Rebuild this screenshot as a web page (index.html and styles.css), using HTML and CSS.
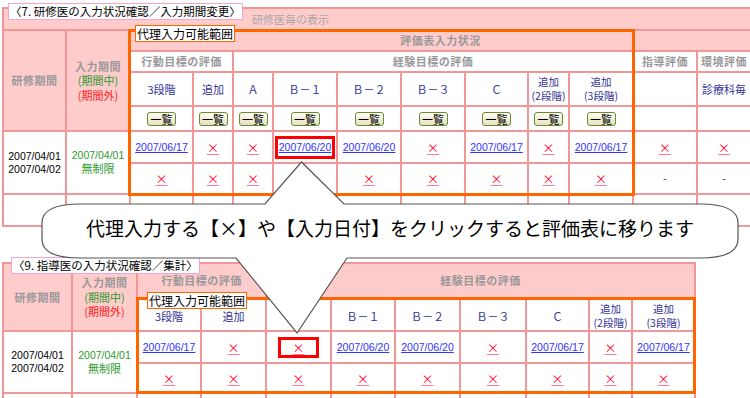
FILE: index.html
```html
<!DOCTYPE html>
<html lang="ja">
<head>
<meta charset="UTF-8" />
<title>代理入力</title>
<link rel="stylesheet" href="styles.css">
</head>
<body>

<div class="panel panel-top">
    <table class="grid grid-top">
        <colgroup>
            <col class="w61"><col class="w62"><col class="w61"><col class="w38"><col class="w38"><col class="w62"><col class="w62">
            <col class="w62"><col class="w61"><col class="w39"><col class="w62"><col class="w62"><col class="w52">
        </colgroup>
        <tr class="h20">
            <td colspan="13" class="pink show">研修医毎の表示</td>
        </tr>
        <tr class="h19">
            <th rowspan="4" class="pink hd">研修期間</th>
            <th rowspan="4" class="pink hd period">入力期間<br><span class="in">(期間中)</span><br><span class="out">(期間外)</span></th>
            <th colspan="11" class="pink hd">評価表入力状況</th>
        </tr>
        <tr class="h19">
            <th colspan="2" class="hd">行動目標の評価</th>
            <th colspan="7" class="hd">経験目標の評価</th>
            <th class="hd">指導評価</th>
            <th class="hd">環境評価</th>
        </tr>
        <tr class="h32 sub">
            <td>3段階</td><td>追加</td><td>Ａ</td><td>Ｂ－１</td><td>Ｂ－２</td><td>Ｂ－３</td><td>Ｃ</td>
            <td class="small">追加<br>(2段階)</td><td class="small">追加<br>(3段階)</td><td></td><td>診療科毎</td>
        </tr>
        <tr class="h23">
            <td><span class="btn">一覧</span></td><td><span class="btn">一覧</span></td><td><span class="btn">一覧</span></td>
            <td><span class="btn">一覧</span></td><td><span class="btn">一覧</span></td><td><span class="btn">一覧</span></td>
            <td><span class="btn">一覧</span></td><td><span class="btn">一覧</span></td><td><span class="btn">一覧</span></td>
            <td></td><td></td>
        </tr>
        <tr class="h30">
            <td rowspan="2" class="term">2007/04/01<br>2007/04/02</td>
            <td rowspan="2" class="term green">2007/04/01<br><span class="jp">無制限</span></td>
            <td><a class="date">2007/06/17</a></td>
            <td><a class="x">×</a></td>
            <td><a class="x">×</a></td>
            <td><a class="date marked">2007/06/20</a></td>
            <td><a class="date">2007/06/20</a></td>
            <td><a class="x">×</a></td>
            <td><a class="date">2007/06/17</a></td>
            <td><a class="x">×</a></td>
            <td><a class="date">2007/06/17</a></td>
            <td><a class="x">×</a></td>
            <td><a class="x">×</a></td>
        </tr>
        <tr class="h29">
            <td><a class="x">×</a></td><td><a class="x">×</a></td><td><a class="x">×</a></td><td><a class="x">×</a></td>
            <td><a class="x">×</a></td><td><a class="x">×</a></td><td><a class="x">×</a></td><td><a class="x">×</a></td>
            <td><a class="x">×</a></td><td class="dash">-</td><td class="dash">-</td>
        </tr>
        <tr class="h30">
            <td></td><td></td><td></td><td></td><td></td><td></td><td></td><td></td><td></td><td></td><td></td><td></td><td></td>
        </tr>
    </table>
    <div class="caption caption-top">〈7. 研修医の入力状況確認／入力期間変更〉</div>
    <div class="proxy proxy-top"><span class="proxy-label">代理入力可能範囲</span></div>
</div>

<div class="panel panel-bottom">
    <table class="grid grid-bottom">
        <colgroup>
            <col class="w67"><col class="w63"><col class="w62"><col class="w63"><col class="w63"><col class="w62">
            <col class="w63"><col class="w64"><col class="w61"><col class="w41"><col class="w61">
        </colgroup>
        <tr class="h33">
            <th rowspan="2" class="pink hd">研修期間</th>
            <th rowspan="2" class="pink hd period">入力期間<br><span class="in">(期間中)</span><br><span class="out">(期間外)</span></th>
            <th colspan="2" class="pink hd">行動目標の評価</th>
            <th colspan="7" class="pink hd">経験目標の評価</th>
        </tr>
        <tr class="h31 sub low">
            <td>3段階</td><td>追加</td><td>Ａ</td><td>Ｂ－１</td><td>Ｂ－２</td><td>Ｂ－３</td><td>Ｃ</td>
            <td class="small">追加<br>(2段階)</td><td class="small">追加<br>(3段階)</td>
        </tr>
        <tr class="h30">
            <td rowspan="2" class="term">2007/04/01<br>2007/04/02</td>
            <td rowspan="2" class="term green">2007/04/01<br><span class="jp">無制限</span></td>
            <td><a class="date">2007/06/17</a></td>
            <td><a class="x">×</a></td>
            <td><a class="x marked">×</a></td>
            <td><a class="date">2007/06/20</a></td>
            <td><a class="date">2007/06/20</a></td>
            <td><a class="x">×</a></td>
            <td><a class="date">2007/06/17</a></td>
            <td><a class="x">×</a></td>
            <td><a class="date">2007/06/17</a></td>
        </tr>
        <tr class="h28">
            <td><a class="x">×</a></td><td><a class="x">×</a></td><td><a class="x">×</a></td><td><a class="x">×</a></td>
            <td><a class="x">×</a></td><td><a class="x">×</a></td><td><a class="x">×</a></td><td><a class="x">×</a></td>
            <td><a class="x">×</a></td>
        </tr>
        <tr class="h30">
            <td></td><td></td><td></td><td></td><td></td><td></td><td></td><td></td><td></td><td></td><td></td>
        </tr>
    </table>
    <div class="caption caption-bottom">〈9. 指導医の入力状況確認／集計〉</div>
    <div class="proxy proxy-bottom"><span class="proxy-label">代理入力可能範囲</span></div>
</div>

<svg class="callout" width="750" height="398" viewBox="0 0 750 398">
    <path d="M80 204 L265 204 L301.5 162 L344 204 L700 204 Q738 204 738 223 L738 239 Q738 258 700 258 L347 258 L297 333 L236 258 L80 258 Q42 258 42 239 L42 223 Q42 204 80 204 Z" />
    <text x="390" y="236">代理入力する【×】や【入力日付】をクリックすると評価表に移ります</text>
</svg>

</body>
</html>
```

FILE: styles.css
```css
* {
    box-sizing: border-box;
}
html, body {
    margin: 0;
}
body {
    position: relative;
    width: 750px;
    height: 398px;
    overflow: hidden;
    background: #fff;
    font-family: "Noto Sans CJK JP", sans-serif;
    font-size: 11px;
    color: #000;
}

.panel {
    position: relative;
    overflow: hidden;
}
.panel-top {
    height: 252px;
    padding: 7px 0 0 2px;
}
.panel-bottom {
    height: 146px;
    padding: 10px 0 0 2px;
}

/* tables */
.grid {
    border-collapse: separate;
    border-spacing: 2px;
    background: #f29797;
    table-layout: fixed;
}
.grid-top {
    width: 750px;
}
.grid-bottom {
    width: 694px;
}
.grid td, .grid th {
    padding: 0;
    background: #fff;
    text-align: center;
    vertical-align: middle;
    font-weight: normal;
    line-height: 13px;
    white-space: nowrap;
    overflow: hidden;
}
.w38 { width: 38px; }
.w39 { width: 39px; }
.w41 { width: 41px; }
.w52 { width: 52px; }
.w61 { width: 61px; }
.w62 { width: 62px; }
.w63 { width: 63px; }
.w64 { width: 64px; }
.w67 { width: 67px; }

.h19 { height: 19px; }
.h20 { height: 20px; }
.h23 { height: 23px; }
.h28 { height: 28px; }
.h29 { height: 29px; }
.h30 { height: 30px; }
.h31 { height: 31px; }
.h32 { height: 32px; }
.h33 { height: 33px; }

.grid .pink {
    background: #ffcccc;
}
.grid .show {
    text-align: left;
    padding-left: 248px;
    color: #a8a8a8;
}
.grid .hd {
    color: #999;
    font-weight: bold;
    letter-spacing: 0.5px;
}
.grid .period {
    line-height: 14.5px;
}
.in {
    color: #2e9a2e;
    font-weight: normal;
    letter-spacing: 0;
}
.out {
    color: #ff2020;
    font-weight: normal;
    letter-spacing: 0;
}

.sub td {
    color: #333399;
}
.sub td.small {
    font-size: 10.5px;
    line-height: 14px;
}
.grid .low td {
    padding-top: 3px;
}

.btn {
    display: inline-block;
    width: 29px;
    height: 14px;
    border: 1px solid #6a8a32;
    border-radius: 3px;
    background: linear-gradient(#fffff4, #e4e0c0);
    font-size: 11px;
    line-height: 12px;
    color: #000;
    vertical-align: middle;
}

.term {
    font-family: "Liberation Sans", Arial, sans-serif;
    font-size: 10.5px;
}
.green {
    color: #2e9a2e;
}
.jp {
    font-family: "Noto Sans CJK JP", sans-serif;
    font-size: 11px;
}

.date {
    font-family: "Liberation Sans", Arial, sans-serif;
    font-size: 10.5px;
    color: #3333ff;
    text-decoration: underline;
}
.x {
    display: inline-block;
    font-size: 12px;
    line-height: 15px;
    color: #ff0033;
    text-decoration: underline;
    text-decoration-color: #ff7a98;
}
.dash {
    color: #333;
}
.date.marked {
    display: inline-block;
    border: 3px solid #ff0000;
    padding: 0 1px;
    line-height: 17px;
}
.x.marked {
    border: 3px solid #ff0000;
    padding: 0 11px;
}

/* labels over the tables */
.caption {
    position: absolute;
    background: #fff;
    border: 1px solid #f4a6d2;
    font-size: 11.5px;
    line-height: 15px;
    padding: 0 1px;
    white-space: nowrap;
}
.caption-top {
    left: 8px;
    top: 3px;
}
.caption-bottom {
    left: 11px;
    top: 5px;
}

.proxy {
    position: absolute;
    border: 3px solid #ff6600;
}
.proxy-top {
    left: 128px;
    top: 29px;
    width: 507px;
    height: 167px;
}
.proxy-bottom {
    left: 136px;
    top: 45px;
    width: 560px;
    height: 97px;
}
.proxy-label {
    position: absolute;
    left: 4px;
    top: -7px;
    background: #fff;
    border: 1px solid #ff6600;
    font-size: 12px;
    line-height: 15px;
    padding: 0 1px;
    white-space: nowrap;
}
.proxy-bottom .proxy-label {
    left: 8px;
    top: -8px;
}

/* speech bubble */
.callout {
    position: absolute;
    left: 0;
    top: 0;
    pointer-events: none;
}
.callout path {
    fill: #fff;
    stroke: #555;
    stroke-width: 1.2;
}
.callout text {
    font-family: "Noto Sans CJK JP", sans-serif;
    font-size: 19px;
    text-anchor: middle;
    fill: #000;
}
```
